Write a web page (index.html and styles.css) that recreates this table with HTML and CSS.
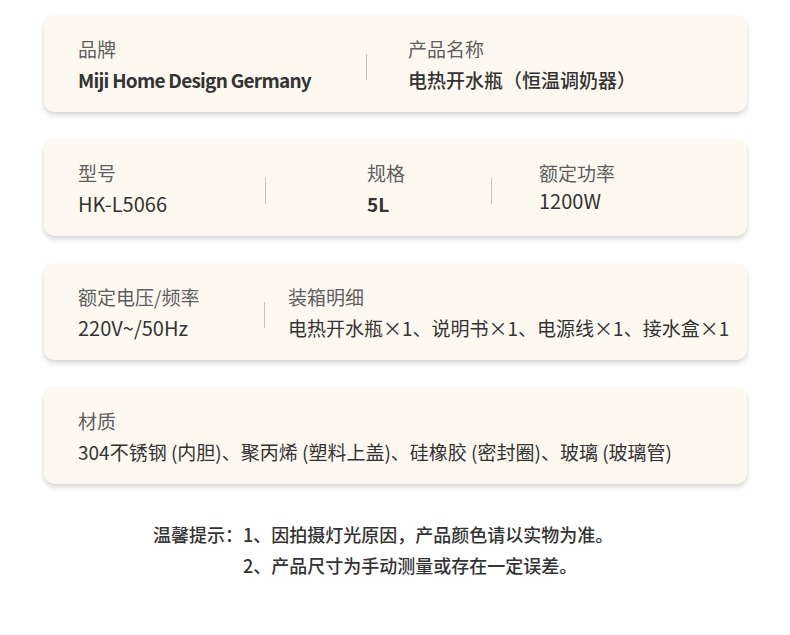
FILE: index.html
```html
<!DOCTYPE html>
<html lang="zh-CN">
<head>
<meta charset="utf-8">
<link rel="stylesheet" href="styles.css">
</head>
<body>
<main class="page">
  <section class="card">
    <div class="cell w-brand">
      <div class="label">品牌</div>
      <div class="value brand">Miji Home Design Germany</div>
    </div>
    <div class="divider"></div>
    <div class="cell m-name">
      <div class="label">产品名称</div>
      <div class="value medium">电热开水瓶（恒温调奶器）</div>
    </div>
  </section>

  <section class="card">
    <div class="cell w-model">
      <div class="label">型号</div>
      <div class="value latin">HK-L5066</div>
    </div>
    <div class="divider"></div>
    <div class="cell m-spec w-spec">
      <div class="label">规格</div>
      <div class="value strong">5L</div>
    </div>
    <div class="divider"></div>
    <div class="cell m-power">
      <div class="label">额定功率</div>
      <div class="value latin up">1200W</div>
    </div>
  </section>

  <section class="card">
    <div class="cell w-volt">
      <div class="label">额定电压/频率</div>
      <div class="value latin">220V~/50Hz</div>
    </div>
    <div class="divider"></div>
    <div class="cell m-pack">
      <div class="label">装箱明细</div>
      <div class="value">电热开水瓶×1、说明书×1、电源线×1、接水盒×1</div>
    </div>
  </section>

  <section class="card">
    <div class="cell">
      <div class="label">材质</div>
      <div class="value">304不锈钢 (内胆)、聚丙烯 (塑料上盖)、硅橡胶 (密封圈)、玻璃 (玻璃管)</div>
    </div>
  </section>

  <section class="notes">
    <p class="note"><span class="note-head">温馨提示：</span>1、因拍摄灯光原因，产品颜色请以实物为准。</p>
    <p class="note indent">2、产品尺寸为手动测量或存在一定误差。</p>
  </section>
</main>
</body>
</html>
```

FILE: styles.css
```css
* { box-sizing: border-box; }
html, body { margin: 0; padding: 0; background: #ffffff; }
body {
  font-family: "Noto Sans CJK SC", "Noto Sans", sans-serif;
  color: #333333;
}
.page {
  padding: 16px 0 0 44px;
  width: 790px;
}
.card {
  width: 703px;
  height: 96px;
  margin-bottom: 28px;
  padding: 18px 34px;
  background: #fdf9f1;
  border-radius: 10px;
  box-shadow: 0 3px 5px rgba(0, 0, 0, 0.16), 0 0 2px rgba(0, 0, 0, 0.05);
  display: flex;
  align-items: flex-start;
}
.cell { display: flex; flex-direction: column; flex-shrink: 0; }
.label {
  font-size: 19px;
  line-height: 30px;
  color: #5f5f5f;
}
.value {
  font-size: 19px;
  line-height: 31px;
  color: #333333;
  white-space: nowrap;
}
.value.latin { font-size: 20px; }
.value.brand { font-weight: 600; letter-spacing: -0.75px; }
.value.strong { font-weight: 700; }
.value.medium { font-weight: 500; }
.value.up { margin-top: -3px; }
.divider {
  width: 1px;
  height: 26px;
  background: #c8c4bc;
  align-self: center;
  margin-top: 6px;
  flex-shrink: 0;
}
.w-brand { width: 288px; }
.m-name { margin-left: 41px; }
.w-model { width: 187px; }
.m-spec { margin-left: 101px; }
.w-spec { width: 124px; }
.m-power { margin-left: 47px; }
.w-volt { width: 186px; }
.m-pack { margin-left: 23px; }
.notes {
  padding-top: 7px;
  padding-left: 109px;
}
.note {
  margin: 0;
  font-size: 18px;
  line-height: 31px;
  font-weight: 500;
  color: #333333;
  white-space: nowrap;
}
.indent { padding-left: 90px; }
```
